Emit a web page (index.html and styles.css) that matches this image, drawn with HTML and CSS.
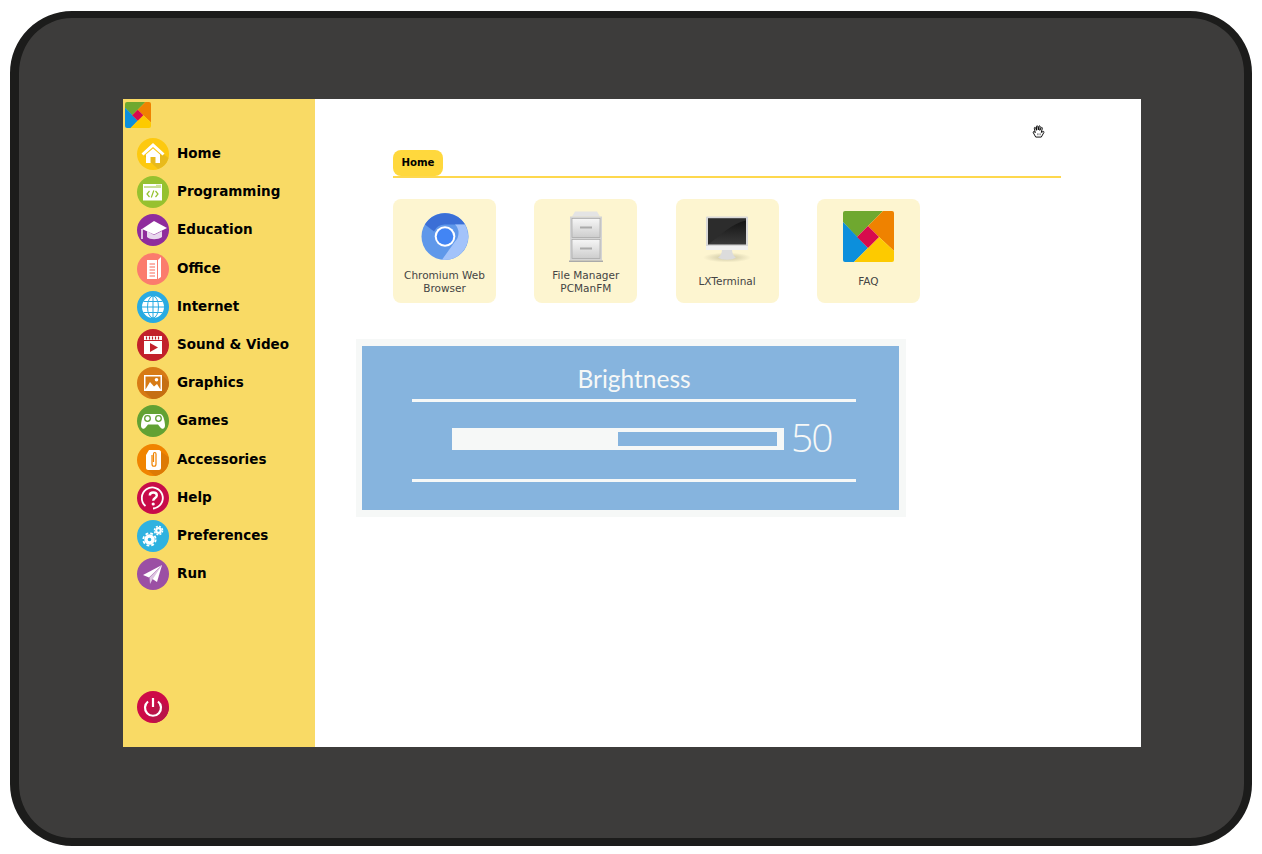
FILE: index.html
```html
<!DOCTYPE html>
<html lang="en">
<head>
    <meta charset="UTF-8">
    <meta name="viewport" content="width=device-width, initial-scale=1.0">
    <title>Launcher</title>
    <link rel="stylesheet" href="styles.css">
</head>
<body>
    <svg class="defs" width="0" height="0">
        <defs>
            <symbol id="logo" viewBox="0 0 51 51">
                <polygon fill="#6fa82f" points="0,0 40,0 25,15 14,26 0,11"/>
                <polygon fill="#ef8200" points="40,0 51,0 51,40 36,26 25,15"/>
                <polygon fill="#0c8fdc" points="0,11 25,37 11,51 0,51"/>
                <polygon fill="#fdca00" points="11,51 25,37 36,26 51,40 51,51"/>
                <polygon fill="#d80b4d" points="25,15 36,26 25,37 14,26"/>
            </symbol>
        </defs>
    </svg>

    <div class="frame">
        <div class="screen">
            <aside class="sidebar">
                <svg class="logo-small"><use href="#logo"/></svg>
                <nav class="menu">
                    <a class="menu-item">
                        <svg class="menu-icon" viewBox="0 0 32 32">
                            <circle cx="16" cy="16" r="16" fill="#fdc90f"/>
                            <path d="M7 18 L21 31 A16 16 0 0 0 31.500 20 L24 14 Z" fill="#e8ba1c"/>
                            <path d="M16 5 L27.500 15.500 L25.500 17.500 L16 9 L6.500 17.500 L4.500 15.500 Z" fill="#fff"/>
                            <path d="M9 16.500 L16 10.500 L23 16.500 V25 H18.500 V19 H13.500 V25 H9 Z" fill="#fff"/>
                        </svg>
                        <span>Home</span>
                    </a>
                    <a class="menu-item">
                        <svg class="menu-icon" viewBox="0 0 32 32">
                            <circle cx="16" cy="16" r="16" fill="#96c12f"/>
                            <path d="M6 8 H25 V24.500 H6 Z" fill="#fff"/>
                            <path d="M7 11 H24" stroke="#96c12f" stroke-width="1" fill="none"/>
                            <path d="M19 9.500 H24" stroke="#cfe39a" stroke-width="1.500"/>
                            <path d="M12.500 15 L10 18 L12.500 21 M18.500 15 L21 18 L18.500 21 M16.800 14.500 L14.300 21.500" stroke="#96c12f" stroke-width="1.200" fill="none"/>
                        </svg>
                        <span>Programming</span>
                    </a>
                    <a class="menu-item">
                        <svg class="menu-icon" viewBox="0 0 32 32">
                            <circle cx="16" cy="16" r="16" fill="#8f2c9c"/>
                            <path d="M10 17 V23 C13 26 21 26 25 23 V17 L17 21 Z" fill="#e9d8ee"/>
                            <path d="M17 7 L30 14 L17 20.500 L5 15 Z" fill="#fff"/>
                            <path d="M5 15 V25" stroke="#fff" stroke-width="1.400"/>
                        </svg>
                        <span>Education</span>
                    </a>
                    <a class="menu-item">
                        <svg class="menu-icon" viewBox="0 0 32 32">
                            <circle cx="16" cy="16" r="16" fill="#fb7c6d"/>
                            <path d="M10 7 H20 V26 H10 Z" fill="#fff"/>
                            <path d="M21 7 L24 4 V24 L21 26 Z" fill="#fff"/>
                            <path d="M12.500 11 H18 M12.500 14 H18 M12.500 17 H18 M12.500 20 H18 M12.500 23 H18" stroke="#fb9c90" stroke-width="1.300"/>
                        </svg>
                        <span>Office</span>
                    </a>
                    <a class="menu-item">
                        <svg class="menu-icon" viewBox="0 0 32 32">
                            <circle cx="16" cy="16" r="16" fill="#29abe2"/>
                            <circle cx="16" cy="16" r="11" fill="#fff"/>
                            <path d="M16 5 V27 M5 16 H27 M6.500 10.500 H25.500 M6.500 21.500 H25.500" stroke="#29abe2" stroke-width="1"/>
                            <ellipse cx="16" cy="16" rx="5.500" ry="11" fill="none" stroke="#29abe2" stroke-width="1"/>
                        </svg>
                        <span>Internet</span>
                    </a>
                    <a class="menu-item">
                        <svg class="menu-icon" viewBox="0 0 32 32">
                            <circle cx="16" cy="16" r="16" fill="#c2202b"/>
                            <path d="M7 7 H25 V25 H7 Z" fill="#fff"/>
                            <path d="M7 11.500 H25" stroke="#c2202b" stroke-width="1"/>
                            <path d="M9.500 7.500 V10.500 M12.500 7.500 V10.500 M15.500 7.500 V10.500 M18.500 7.500 V10.500 M21.500 7.500 V10.500" stroke="#c2202b" stroke-width="1.200"/>
                            <path d="M13 14 L21 18.500 L13 23 Z" fill="#c2202b"/>
                        </svg>
                        <span>Sound &amp; Video</span>
                    </a>
                    <a class="menu-item">
                        <svg class="menu-icon" viewBox="0 0 32 32">
                            <circle cx="16" cy="16" r="16" fill="#d77a15"/>
                            <path d="M7 24 H25 V8 L31.900 15 A16 16 0 0 1 15 31.900 Z" fill="#c56f12"/>
                            <rect x="7" y="8" width="18" height="16" fill="#fff"/>
                            <path d="M8.500 22.500 L13 15 L17 19.500 L20 17 L23.500 22.500 V9.500 H8.500 Z" fill="#d77a15"/>
                            <circle cx="19.500" cy="12.800" r="1.800" fill="#fff"/>
                        </svg>
                        <span>Graphics</span>
                    </a>
                    <a class="menu-item">
                        <svg class="menu-icon" viewBox="0 0 32 32">
                            <circle cx="16" cy="16" r="16" fill="#62a133"/>
                            <path d="M9 9 H23 C26 9 27.500 14 28 20 C28.300 24 25 25 23 22 L21 19.500 H11 L9 22 C7 25 3.700 24 4 20 C4.500 14 6 9 9 9 Z" fill="#fff"/>
                            <circle cx="10.500" cy="13.500" r="2.800" fill="none" stroke="#62a133" stroke-width="1.300"/>
                            <circle cx="21.500" cy="13.500" r="2.800" fill="none" stroke="#62a133" stroke-width="1.300"/>
                        </svg>
                        <span>Games</span>
                    </a>
                    <a class="menu-item">
                        <svg class="menu-icon" viewBox="0 0 32 32">
                            <circle cx="16" cy="16" r="16" fill="#f08400"/>
                            <path d="M23 7 L31.500 13 A16 16 0 0 1 18 31.900 L9 25 H23 Z" fill="#dd7a05"/>
                            <path d="M12 6 H22 C23 6 24 7 24 8 V24 C24 25 23 26 22 26 H11 C10 26 9 25 9 24 V11 Z" fill="#fff"/>
                            <path d="M15 11 V20 C15 23 19 23 19 20 V10 C19 8 16.500 8 16.500 10 V18" fill="none" stroke="#f08400" stroke-width="1.200"/>
                        </svg>
                        <span>Accessories</span>
                    </a>
                    <a class="menu-item">
                        <svg class="menu-icon" viewBox="0 0 32 32">
                            <circle cx="16" cy="16" r="16" fill="#c80c49"/>
                            <path d="M8.500 24 A10.500 10.500 0 1 1 16 26.500" fill="none" stroke="#fff" stroke-width="1.800"/>
                            <path d="M12.800 13.500 C12.800 9.500 19.800 9.500 19.800 13.500 C19.800 16 16.200 16 16.200 18.800" fill="none" stroke="#fff" stroke-width="2.400"/>
                            <circle cx="16.200" cy="22" r="1.600" fill="#fff"/>
                        </svg>
                        <span>Help</span>
                    </a>
                    <a class="menu-item">
                        <svg class="menu-icon" viewBox="0 0 32 32">
                            <circle cx="16" cy="16" r="16" fill="#2fb2e0"/>
                            <circle cx="12.500" cy="19.500" r="3.500" fill="none" stroke="#fff" stroke-width="3.400"/>
                            <circle cx="12.500" cy="19.500" r="6.200" fill="none" stroke="#fff" stroke-width="1.800" stroke-dasharray="2.800 2.070"/>
                            <circle cx="21.500" cy="10.500" r="2.300" fill="none" stroke="#fff" stroke-width="2.200"/>
                            <circle cx="21.500" cy="10.500" r="4.100" fill="none" stroke="#fff" stroke-width="1.400" stroke-dasharray="2 1.220"/>
                        </svg>
                        <span>Preferences</span>
                    </a>
                    <a class="menu-item">
                        <svg class="menu-icon" viewBox="0 0 32 32">
                            <circle cx="16" cy="16" r="16" fill="#9b4fa4"/>
                            <path d="M25 7 L6 17 L12 19.500 Z" fill="#fff"/>
                            <path d="M25 7 L14 20 L20 24 Z" fill="#fff"/>
                            <path d="M25 7 L12.500 19.500 L13 26 L15.500 21.500 Z" fill="#dcc3e0"/>
                        </svg>
                        <span>Run</span>
                    </a>
                </nav>
                <svg class="menu-icon power" viewBox="0 0 32 32">
                    <circle cx="16" cy="16" r="16" fill="#cd0a47"/>
                    <path d="M22 9 L31.900 17 A16 16 0 0 1 17 31.900 L10 24 Z" fill="#ba1449"/>
                    <path d="M11 10.500 A8 8 0 1 0 21 10.500" fill="none" stroke="#fff" stroke-width="2.200"/>
                    <path d="M16 7 V16" stroke="#fff" stroke-width="2.200"/>
                </svg>
            </aside>

            <main class="content">
                <div class="tabs"><span class="tab">Home</span></div>

                <div class="tiles">
                    <div class="tile">
                        <svg class="tile-icon" viewBox="0 0 50 50">
                            <circle cx="25" cy="25" r="23.500" fill="#5f98ea"/>
                            <path d="M5 13 A23.500 23.500 0 0 1 45 13 H25 A12 12 0 0 0 14 20 Z" fill="#3b6fd6"/>
                            <path d="M45 13 A23.500 23.500 0 0 1 22 48.300 L35 30 A12 12 0 0 0 35 13 Z" fill="#a3c3fa"/>
                            <circle cx="25" cy="25" r="10.300" fill="#fff"/>
                            <circle cx="25" cy="25" r="8.300" fill="#4285f4"/>
                        </svg>
                        <p class="tile-label">Chromium Web<br>Browser</p>
                    </div>
                    <div class="tile">
                        <svg class="tile-icon" viewBox="0 0 50 50">
                            <defs>
                                <linearGradient id="steel" x1="0" y1="0" x2="0" y2="1">
                                    <stop offset="0" stop-color="#f6f6f6"/>
                                    <stop offset="1" stop-color="#cdcdcd"/>
                                </linearGradient>
                            </defs>
                            <path d="M11 5 L14 0 H36 L39 5 Z" fill="#e4e4e4"/>
                            <rect x="9" y="5" width="32" height="44" fill="#d4d4d4"/>
                            <rect x="8" y="49" width="34" height="1.500" fill="#aaa"/>
                            <rect x="11" y="7" width="28" height="19" fill="url(#steel)" stroke="#a5a5a5" stroke-width=".7"/>
                            <rect x="11" y="28" width="28" height="19" fill="url(#steel)" stroke="#a5a5a5" stroke-width=".7"/>
                            <path d="M19 15 H31 V17 H19 Z M19 36 H31 V38 H19 Z" fill="#aaa"/>
                        </svg>
                        <p class="tile-label">File Manager<br>PCManFM</p>
                    </div>
                    <div class="tile">
                        <svg class="tile-icon" viewBox="0 0 50 50">
                            <defs>
                                <linearGradient id="glass" x1="0" y1="0" x2="0" y2="1">
                                    <stop offset="0" stop-color="#111"/>
                                    <stop offset="1" stop-color="#3a3a3a"/>
                                </linearGradient>
                                <radialGradient id="shade">
                                    <stop offset="0" stop-color="#c9c3a0"/>
                                    <stop offset="1" stop-color="#fdf5d0"/>
                                </radialGradient>
                            </defs>
                            <ellipse cx="25" cy="46" rx="24" ry="5" fill="url(#shade)"/>
                            <path d="M20 38 H30 C30 42 32 45 34 46 C30 49 20 49 16 46 C18 45 20 42 20 38 Z" fill="#dcdcdc"/>
                            <rect x="4" y="5" width="42" height="33" rx="1" fill="#d8d8d8"/>
                            <rect x="4" y="34.500" width="42" height="4" fill="#f1f1f1"/>
                            <rect x="6" y="7" width="38" height="26" fill="url(#glass)"/>
                            <path d="M6 33 C18 24 30 12 44 9 V7 H6 Z" fill="#2c2c2c"/>
                        </svg>
                        <p class="tile-label">LXTerminal</p>
                    </div>
                    <div class="tile">
                        <svg class="tile-icon logo-large"><use href="#logo"/></svg>
                        <p class="tile-label">FAQ</p>
                    </div>
                </div>

                <section class="brightness">
                    <div class="brightness-inner">
                        <h2 class="brightness-title">Brightness</h2>
                        <hr class="rule">
                        <div class="slider-row">
                            <div class="slider"><div class="slider-fill"></div><div class="slider-rest"></div></div>
                            <span class="slider-value">50</span>
                        </div>
                        <hr class="rule">
                    </div>
                </section>

                <svg class="hand" viewBox="0 0 14 15">
                    <path d="M4 13.500 L1.500 9 C0.700 7.800 2 7 3 8 L3.500 8.700 L2.500 4 C2.300 3 3.500 2.600 3.900 3.600 L4.900 6.200 L4.800 2.200 C4.800 1 6.200 1 6.300 2.200 L6.800 5.800 L7.400 2 C7.600 1 8.900 1.200 8.800 2.300 L8.400 6.300 L9.900 3.500 C10.400 2.600 11.500 3.200 11.100 4.200 L10 8.500 L12 7.500 C12.800 7.300 13.300 8 12.700 8.700 L10 13.500 Z" fill="#fff" stroke="#000" stroke-width="1"/>
                    <path d="M6 9.500 V11.500 M7.500 9.500 V11.500 M9 9.500 V11.500" stroke="#555" stroke-width=".7"/>
                </svg>
            </main>
        </div>
    </div>
</body>
</html>
```

FILE: styles.css
```css
/* Marco de la tableta */
html, body {
    margin: 0;
    height: 100%;
    background-color: #fff;
}

.defs {
    position: absolute;
}

.frame {
    box-sizing: border-box;
    width: 1242px;
    height: 835px;
    margin: 11px 0 0 10px;
    padding: 81px 103px 0 104px;
    background-color: #3d3c3b;
    border-style: solid;
    border-color: #1c1c1b;
    border-width: 7px 8px 8px 9px;
    border-radius: 62px;
}

.screen {
    display: flex;
    height: 648px;
    background-color: #fff;
}

/* Barra lateral */
.sidebar {
    display: flex;
    flex-direction: column;
    flex: 0 0 192px;
    box-sizing: border-box;
    padding: 3px 0 24px 2px;
    background-color: #f9da65;
}

.logo-small {
    width: 26px;
    height: 26px;
    border-radius: 2px;
}

.menu {
    display: flex;
    flex-direction: column;
    margin: 7px 0 0 12px;
}

.menu-item {
    display: flex;
    align-items: center;
    gap: 8px;
    height: 38.2px;
    color: #000;
    font: bold 13.5px "DejaVu Sans", sans-serif;
}

.menu-item span {
    padding-bottom: 2px;
}

.menu-icon {
    flex: none;
    width: 32px;
    height: 32px;
}

.power {
    margin: auto 0 0 12px;
}

/* Contenido */
.content {
    position: relative;
    flex: 1;
    padding: 51px 80px 0 41px;
}

.tabs {
    margin-left: 37px;
    border-bottom: 2px solid #fed84e;
}

.tab {
    display: block;
    box-sizing: border-box;
    width: 50px;
    height: 26px;
    background-color: #ffd83d;
    border-radius: 8px;
    color: #000;
    font: bold 10.2px/26px "DejaVu Sans", sans-serif;
    text-align: center;
}

.tiles {
    display: flex;
    gap: 38.3px;
    margin: 21px 0 0 37px;
}

.tile {
    display: flex;
    flex-direction: column;
    align-items: center;
    box-sizing: border-box;
    width: 103px;
    height: 104px;
    padding-top: 12px;
    background-color: #fdf5d0;
    border-radius: 8px;
}

.tile-icon {
    flex: none;
    width: 50px;
    height: 51px;
}

.logo-large {
    width: 51px;
    border-radius: 2px;
}

.tile-label {
    display: flex;
    align-items: center;
    height: 27px;
    margin: 6.5px 0 0;
    color: #444;
    font: 10.5px/13.5px "DejaVu Sans", sans-serif;
    text-align: center;
}

/* Panel de brillo */
.brightness {
    box-sizing: border-box;
    width: 550px;
    height: 178px;
    margin-top: 36px;
    padding: 7px 7px 7px 6px;
    background-color: #f6f8f7;
}

.brightness-inner {
    box-sizing: border-box;
    height: 164px;
    padding: 16px 43px 0 50px;
    background-color: #86b4de;
    color: #f6f8f7;
}

.brightness-title {
    margin: 0;
    height: 37px;
    font: 400 24.5px/34px Lato, sans-serif;
    text-align: center;
}

.rule {
    height: 3px;
    margin: 0;
    border: 0;
    background-color: #f6f8f7;
}

.slider-row {
    display: flex;
    align-items: center;
    box-sizing: border-box;
    height: 77px;
    padding: 0 0 3px 40px;
}

.slider {
    display: flex;
    flex: none;
    box-sizing: border-box;
    width: 332px;
    height: 22px;
    border: 4px solid #f6f8f7;
    border-right-width: 7px;
    border-left: 0;
    background-color: #f6f8f7;
}

.slider-fill {
    width: 166px;
}

.slider-rest {
    flex: 1;
    height: 14px;
    background-color: #86b4de;
}

.slider-value {
    margin: -6px 0 0 7px;
    font: 300 39px/1 "Open Sans", sans-serif;
    letter-spacing: -2px;
}

/* Puntero */
.hand {
    position: absolute;
    top: 25px;
    left: 717px;
    width: 13px;
    height: 15px;
}
```
